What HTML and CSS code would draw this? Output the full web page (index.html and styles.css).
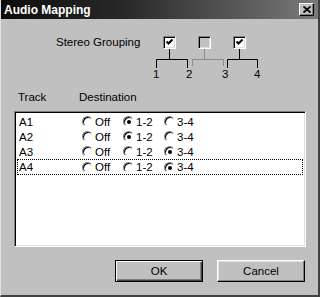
FILE: index.html
```html
<!DOCTYPE html>
<html lang="en">
<head>
  <meta charset="UTF-8">
  <title>Audio Mapping</title>
  <link rel="stylesheet" href="styles.css">
</head>
<body>
  <div class="window">
    <!-- title bar -->
    <div class="titlebar">
      <span class="title">Audio Mapping</span>
      <span class="close">
        <svg width="8" height="7" viewBox="0 0 8 7"><path d="M0.5 0.5 L7.5 6.5 M7.5 0.5 L0.5 6.5" stroke="#000" stroke-width="1.8" fill="none"/></svg>
      </span>
    </div>

    <div class="body">
      <!-- stereo grouping -->
      <div class="stereo">
        <span class="stereo-label">Stereo Grouping</span>
        <div class="grouping">
          <div class="checks">
            <span class="check on"><svg width="9" height="9" viewBox="0 0 9 9"><polyline points="1.5,3.5 3.5,5.5 7.5,1.5" stroke="#000" stroke-width="2" fill="none"/></svg></span>
            <span class="check disabled"></span>
            <span class="check on"><svg width="9" height="9" viewBox="0 0 9 9"><polyline points="1.5,3.5 3.5,5.5 7.5,1.5" stroke="#000" stroke-width="2" fill="none"/></svg></span>
          </div>
          <svg class="brackets" width="112" height="19" viewBox="0 0 112 19">
            <path d="M19.5 0 V10.5 M6.5 19 V10.5 H37.5 V19" stroke="#000" fill="none"/>
            <path d="M54.5 0 V10.5 M42.5 17 V10.5 H73.5 V17" stroke="#8a8a8a" fill="none"/>
            <path d="M89.5 0 V10.5 M77.5 19 V10.5 H107.5 V19" stroke="#000" fill="none"/>
          </svg>
          <div class="channels">
            <span>1</span><span>2</span><span>3</span><span>4</span>
          </div>
        </div>
      </div>

      <!-- track list -->
      <div class="headers">
        <span class="col-track">Track</span>
        <span>Destination</span>
      </div>
      <div class="listbox">
        <div class="row">
          <span class="track">A1</span>
          <span class="opt"><i class="radio"></i>Off</span>
          <span class="opt"><i class="radio checked"></i>1-2</span>
          <span class="opt"><i class="radio"></i>3-4</span>
        </div>
        <div class="row">
          <span class="track">A2</span>
          <span class="opt"><i class="radio"></i>Off</span>
          <span class="opt"><i class="radio checked"></i>1-2</span>
          <span class="opt"><i class="radio"></i>3-4</span>
        </div>
        <div class="row">
          <span class="track">A3</span>
          <span class="opt"><i class="radio"></i>Off</span>
          <span class="opt"><i class="radio"></i>1-2</span>
          <span class="opt"><i class="radio checked"></i>3-4</span>
        </div>
        <div class="row focused">
          <span class="track">A4</span>
          <span class="opt"><i class="radio"></i>Off</span>
          <span class="opt"><i class="radio"></i>1-2</span>
          <span class="opt"><i class="radio checked"></i>3-4</span>
        </div>
      </div>

      <!-- dialog buttons -->
      <div class="buttons">
        <button class="btn default">OK</button>
        <button class="btn">Cancel</button>
      </div>
    </div>
  </div>
</body>
</html>
```

FILE: styles.css
```css
* { box-sizing: border-box; margin: 0; padding: 0; }
body {
  font-family: 'Liberation Sans', Arial, sans-serif;
  font-size: 11.5px;
  color: #000;
  background: #c0c0c0;
}
.window {
  width: 320px;
  height: 297px;
  background: #c0c0c0;
  border-left: 1px solid #dfdfdf;
  border-right: 2px solid #404040;
  border-bottom: 2px solid #404040;
  display: flex;
  flex-direction: column;
}
.titlebar {
  height: 19px;
  background: linear-gradient(to right, #0c0c0c 0%, #2a2a2a 40%, #7a7a7a 100%);
  display: flex;
  align-items: center;
  justify-content: space-between;
  padding: 0 4px 0 3px;
}
.title {
  color: #fff;
  font-weight: bold;
  font-size: 12px;
}
.close {
  width: 15px;
  height: 13px;
  background: #c0c0c0;
  border-top: 1px solid #fff;
  border-left: 1px solid #fff;
  border-right: 1px solid #000;
  border-bottom: 1px solid #000;
  box-shadow: inset -1px -1px #808080;
  display: flex;
  align-items: center;
  justify-content: center;
}
.body {
  flex: 1;
  padding: 17px 12px 0 13px;
  display: flex;
  flex-direction: column;
}
.stereo {
  display: flex;
  padding-left: 42px;
}
.stereo-label {
  width: 94px;
  line-height: 13px;
}
.grouping {
  width: 112px;
}
.checks {
  display: flex;
  gap: 22px;
  padding-left: 13px;
}
.check {
  width: 13px;
  height: 13px;
  background: #fff;
  border-top: 1px solid #808080;
  border-left: 1px solid #808080;
  border-right: 1px solid #fff;
  border-bottom: 1px solid #fff;
  box-shadow: inset 1px 1px #000, inset -1px -1px #dfdfdf;
  display: flex;
  align-items: center;
  justify-content: center;
}
.check.disabled {
  background: #c0c0c0;
}
.brackets {
  display: block;
}
.channels {
  display: grid;
  grid-template-columns: 33px 36px 32px auto;
  padding-left: 3px;
  line-height: 13px;
}
.headers {
  display: flex;
  margin-top: 10px;
  padding-left: 4px;
  line-height: 13px;
}
.col-track {
  width: 61px;
}
.listbox {
  margin-top: 7px;
  width: 292px;
  height: 136px;
  background: #fff;
  border-top: 1px solid #808080;
  border-left: 1px solid #808080;
  border-right: 1px solid #fff;
  border-bottom: 1px solid #fff;
  box-shadow: inset 1px 1px #000, inset -1px -1px #dfdfdf;
  padding: 2px 2px 0 2px;
}
.row {
  display: flex;
  align-items: center;
  height: 15px;
  padding-left: 1px;
  border: 1px solid transparent;
}
.row.focused {
  height: 16px;
  border: 1px dotted #000;
}
.track {
  width: 63px;
}
.opt {
  display: flex;
  align-items: center;
  gap: 2px;
  width: 41px;
}
.radio {
  position: relative;
  width: 11px;
  height: 11px;
  border-radius: 50%;
  background: #fff;
  border: 1px solid;
  border-color: #808080 #fff #fff #808080;
  box-shadow: inset 1px 1px #000;
}
.radio.checked::after {
  content: '';
  position: absolute;
  left: 3px;
  top: 3px;
  width: 4px;
  height: 4px;
  border-radius: 50%;
  background: #000;
}
.buttons {
  display: flex;
  justify-content: flex-end;
  gap: 14px;
  margin-top: 13px;
  padding-right: 1px;
}
.btn {
  width: 88px;
  height: 22px;
  font-family: inherit;
  font-size: 11.5px;
  background: #c0c0c0;
  border-top: 1px solid #fff;
  border-left: 1px solid #fff;
  border-right: 1px solid #000;
  border-bottom: 1px solid #000;
  box-shadow: inset -1px -1px #808080, inset 1px 1px #dfdfdf;
}
.btn.default {
  border: 1px solid #000;
  box-shadow: inset 1px 1px #fff, inset -1px -1px #404040, inset -2px -2px #808080;
}
```
